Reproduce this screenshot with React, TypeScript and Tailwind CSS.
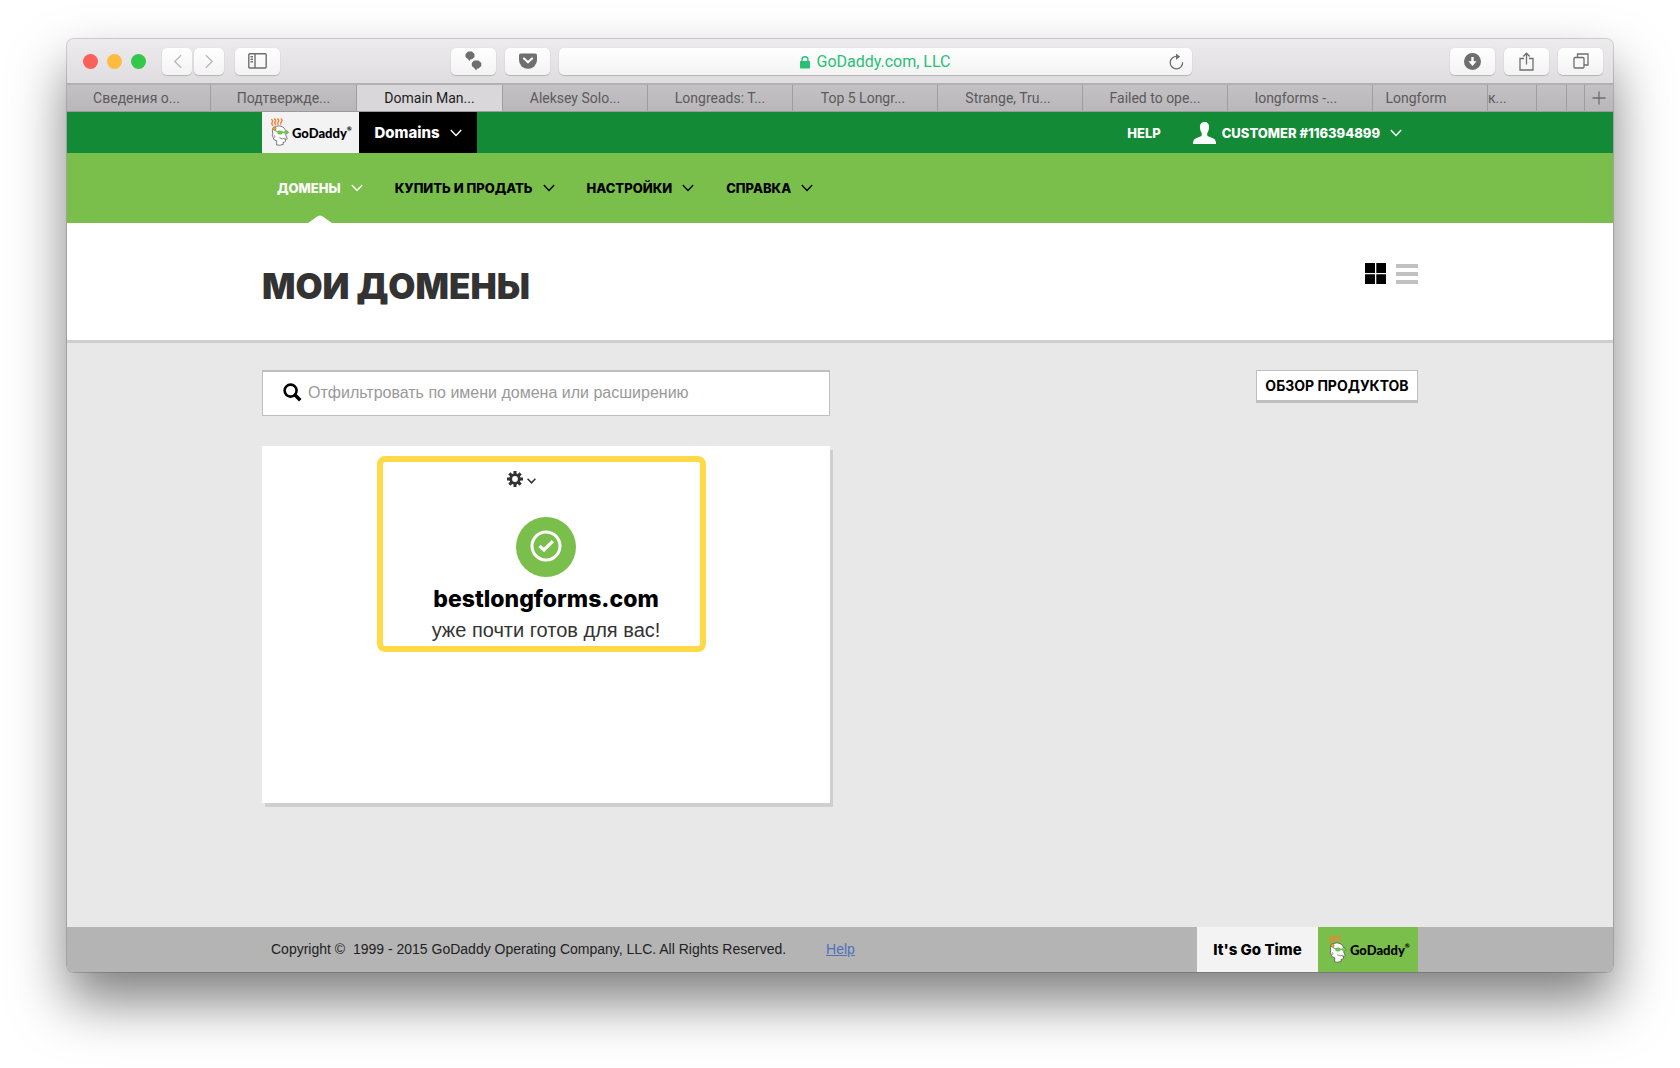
import type { ReactNode } from "react"

const tabs = [
  { title: "Сведения о...", className: "pr-1" },
  { title: "Подтвержде..." },
  { title: "Domain Man...", active: true },
  { title: "Aleksey Solo..." },
  { title: "Longreads: T..." },
  { title: "Top 5 Longr...", className: "pr-1" },
  { title: "Strange, Tru...", className: "pr-1" },
  { title: "Failed to ope..." },
  { title: "longforms -...", className: "pr-2" },
  { title: "Longform", className: "pr-7" },
  { title: "к...", className: "justify-start" },
  { title: "" },
  { title: "" },
]

const menu = [
  { title: "ДОМЕНЫ", active: true },
  { title: "КУПИТЬ И ПРОДАТЬ" },
  { title: "НАСТРОЙКИ" },
  { title: "СПРАВКА" },
]

function Chevron({ className = "w-3 h-2" }: { className?: string }) {
  return (
    <svg viewBox="0 0 12 8" className={className} fill="none" stroke="currentColor" strokeWidth="1.4">
      <path d="M0.8 1 L6 6.4 L11.2 1" />
    </svg>
  )
}

function ToolButton({ label, className = "w-[45px]", children }: { label: string; className?: string; children: ReactNode }) {
  return (
    <button
      aria-label={label}
      className={`${className} h-[27px] shrink-0 rounded-[5px] bg-gradient-to-b from-white to-[#f4f3f4] shadow-[0_1px_1px_#b5b3b5,0_0_1px_#c8c6c8] flex items-center justify-center text-[#6e6e6e]`}
    >
      {children}
    </button>
  )
}

function Logo() {
  return (
    <a href="#" className="flex items-center gap-0.5 text-black no-underline">
      <svg viewBox="60 38 60 88" className="w-5 h-[29px] shrink-0">
        <path
          d="M63 42 q8 3 3 9 q-3 5 4 10 M72 40 q8 4 3 10 q-3 5 3 9 M82 40 q7 5 2 10 q-3 4 1 9 M92 40 q8 4 2 10 q-3 4 -2 8"
          fill="none"
          stroke="#f58233"
          strokeWidth="4.2"
        />
        <path
          d="M67 76 Q70 63 86 62 Q101 62 107 76 L112 78 Q111 87 107 89 L112 101 Q110 104 105 102 L107 108 Q104 113 99 112 L100 118 Q90 122 80 120 L80 107 Q69 106 69 96 Q65 90 68 86 Z"
          fill="#fff"
          stroke="#3a3a3a"
          strokeWidth="2"
        />
        <path d="M88 98 q8 6 18 1 M72 90 q4 3 2 8" fill="none" stroke="#3a3a3a" strokeWidth="1.8" />
        <circle cx="73" cy="70" r="5" fill="#f9b51a" stroke="#3a3a3a" strokeWidth="1.4" />
        <path d="M74 76 L83 80 M97 81 L103 81" stroke="#3a3a3a" strokeWidth="2" />
        <ellipse cx="90" cy="82" rx="8" ry="5" fill="#6fd044" stroke="#3f9a35" strokeWidth="1.4" />
        <ellipse cx="109" cy="82" rx="7" ry="4" fill="#6fd044" stroke="#3f9a35" strokeWidth="1.4" />
      </svg>
      <span className="flex items-start font-[Lato,sans-serif] text-[13px] leading-5 font-black">
        GoDaddy<span className="text-[6px] leading-3">®</span>
      </span>
    </a>
  )
}

function Toolbar() {
  return (
    <div className="h-[44px] shrink-0 pl-4 pr-[10px] flex items-center bg-gradient-to-b from-[#edebed] to-[#dfdddf]">
      <div className="flex gap-[9px]">
        <span className="size-[15px] rounded-full bg-[#fc605b]" />
        <span className="size-[15px] rounded-full bg-[#fdbc40]" />
        <span className="size-[15px] rounded-full bg-[#34c84a]" />
      </div>
      <div className="ml-4 flex gap-0.5">
        <ToolButton label="Back" className="w-[30px]">
          <svg viewBox="0 0 10 16" className="w-[9px] h-[15px]" fill="none" stroke="#b9b9b9" strokeWidth="1.5">
            <path d="M9 1 L2 8 L9 15" />
          </svg>
        </ToolButton>
        <ToolButton label="Forward" className="w-[30px]">
          <svg viewBox="0 0 10 16" className="w-[9px] h-[15px]" fill="none" stroke="#b9b9b9" strokeWidth="1.5">
            <path d="M1 1 L8 8 L1 15" />
          </svg>
        </ToolButton>
      </div>
      <div className="ml-[11px]">
        <ToolButton label="Sidebar">
          <svg viewBox="0 0 19 16" className="w-[19px] h-4" fill="none" stroke="currentColor" strokeWidth="1.4">
            <rect x="0.8" y="0.8" width="17.4" height="14.2" rx="1" />
            <path d="M7 1 V15 M2.5 3.8 H5 M2.5 6.3 H5 M2.5 8.8 H5" />
          </svg>
        </ToolButton>
      </div>
      <div className="ml-[171px] mr-[258px] flex-1 flex gap-[9px]">
        <ToolButton label="Ghostery">
          <svg viewBox="0 0 17 20" className="w-[17px] h-5" fill="currentColor">
            <path d="M3 0.5 H7 L9.5 3 V6 L7 8.3 H5.5 L4.5 10 L3 8.3 L0.5 6 V3 Z" />
            <path d="M9 9.5 H13.5 L16.3 12 V15 L13.5 17.5 H12.3 L11 19.5 L9.7 17.5 L6.8 15 V12 Z" />
          </svg>
        </ToolButton>
        <ToolButton label="Pocket">
          <svg viewBox="0 0 18 16" className="w-[18px] h-4">
            <path d="M1.8 0.5 H16.2 Q18 0.5 18 2.3 V7 A9 8.7 0 0 1 0 7 V2.3 Q0 0.5 1.8 0.5 Z" fill="currentColor" />
            <path d="M5 5.5 L9 9.3 L13 5.5" fill="none" stroke="#fff" strokeWidth="2.2" strokeLinecap="round" strokeLinejoin="round" />
          </svg>
        </ToolButton>
        <div className="relative h-[27px] flex-1 pt-0.5 rounded-[5px] bg-gradient-to-b from-white to-[#f4f3f4] shadow-[0_1px_1px_#b5b3b5,0_0_1px_#c8c6c8] flex items-center justify-center gap-1.5">
          <svg viewBox="0 0 10 13" className="w-[10px] h-[13px]">
            <rect x="0" y="5" width="10" height="7.5" rx="0.8" fill="#27c175" />
            <path d="M2 6 V3.8 A3 3 0 0 1 8 3.8 V6" fill="none" stroke="#27c175" strokeWidth="1.4" />
          </svg>
          <input
            aria-label="Address"
            defaultValue="GoDaddy.com, LLC"
            className="field-sizing-content bg-transparent font-[Roboto,sans-serif] text-[16px] leading-5 text-[#27c175] outline-none"
          />
          <button aria-label="Reload" className="absolute right-2 top-[5px] text-[#6e6e6e]">
            <svg viewBox="0 0 15 17" className="w-[15px] h-[17px]" fill="none" stroke="currentColor" strokeWidth="1.3">
              <path d="M13.6 9.2 A6.2 6.2 0 1 1 8 3.5" />
              <path d="M7 0.5 L11.2 3.7 L7 6.8 Z" fill="currentColor" stroke="none" />
            </svg>
          </button>
        </div>
      </div>
      <div className="flex gap-[9px]">
        <ToolButton label="Downloads">
          <svg viewBox="0 0 17 17" className="size-[17px]">
            <circle cx="8.5" cy="8.5" r="8.5" fill="currentColor" />
            <path d="M7.3 4 H9.7 V8.3 H12.6 L8.5 13 L4.4 8.3 H7.3 Z" fill="#fff" />
          </svg>
        </ToolButton>
        <ToolButton label="Share">
          <svg viewBox="0 0 15 19" className="w-[15px] h-[19px]" fill="none" stroke="currentColor" strokeWidth="1.3">
            <path d="M5 6.5 H1 V18 H14 V6.5 H10 M7.5 12.5 V1.5 M4.3 4.5 L7.5 1.2 L10.7 4.5" />
          </svg>
        </ToolButton>
        <ToolButton label="Show all tabs">
          <svg viewBox="0 0 16 16" className="size-4" fill="none" stroke="currentColor" strokeWidth="1.3">
            <rect x="1" y="4.5" width="10" height="10.5" rx="1" />
            <path d="M4.5 4.5 V1 H15 V12 H11" />
          </svg>
        </ToolButton>
      </div>
    </div>
  )
}

function TabBar() {
  return (
    <div className="h-[29px] shrink-0 grid grid-cols-[144fr_146fr_146fr_145fr_145fr_145fr_145fr_145fr_145fr_115fr_49fr_30fr_18fr_28fr] border-t-2 border-b border-t-[#b3b0b3] border-b-[#9c9a9c] bg-gradient-to-b from-[#c3c1c3] to-[#b9b7b9] font-[Roboto,sans-serif] text-[14px] leading-5">
      {tabs.map((tab, index) => (
        <button
          key={index}
          aria-label={tab.title || "Tab"}
          className={`min-w-0 overflow-hidden whitespace-nowrap flex items-center border-r border-[#9f9d9f] ${
            tab.active ? "bg-[#d9d7d9] text-[#1d1d1d]" : "text-[#5c5a5c]"
          } ${tab.className ?? ""} ${tab.className === "justify-start" ? "" : "justify-center"}`}
        >
          {tab.title}
        </button>
      ))}
      <button aria-label="New tab" className="flex items-center justify-center text-[#6e6c6e]">
        <svg viewBox="0 0 14 14" className="size-[14px]" stroke="currentColor" strokeWidth="1.3">
          <path d="M7 0.5 V13.5 M0.5 7 H13.5" />
        </svg>
      </button>
    </div>
  )
}

export default function App() {
  return (
    <div className="min-h-screen bg-white px-[67px] pt-[39px] pb-24 flex flex-col font-['Liberation_Sans',sans-serif]">
      <div className="flex-1 flex flex-col overflow-hidden rounded-[7px] bg-[#e8e8e8] shadow-[0_0_0_1px_rgba(0,0,0,0.16),0_29px_54px_rgba(0,0,0,0.5)]">
        <Toolbar />
        <TabBar />

        <header className="h-[41px] shrink-0 bg-[#138a36] font-[Inter,sans-serif] font-extrabold text-white">
          <div className="h-full max-w-[1156px] mx-auto flex items-stretch">
            <div className="w-[97px] pl-2 bg-[#f3f3f3] flex items-center">
              <Logo />
            </div>
            <button className="w-[118px] bg-black flex items-center justify-center gap-2.5 text-[15px] leading-5">
              Domains <Chevron />
            </button>
            <div className="ml-auto pr-4 flex items-center text-[13px] leading-5">
              <a href="#" className="mr-8">HELP</a>
              <button className="flex items-center gap-2.5">
                <span className="flex items-center gap-1.5">
                  <svg viewBox="0 0 23 22" className="w-[23px] h-[22px]" fill="currentColor">
                    <path d="M11.5 0 C15 0 16.3 2.5 16 6 C15.8 8.5 15 10 14.2 11.3 L14.4 14 L20.5 16.6 Q23 17.8 23 22 H0 Q0 17.8 2.5 16.6 L8.6 14 L8.8 11.3 C8 10 7.2 8.5 7 6 C6.7 2.5 8 0 11.5 0 Z" />
                  </svg>
                  CUSTOMER #116394899
                </span>
                <Chevron />
              </button>
            </div>
          </div>
        </header>

        <nav className="h-[70px] shrink-0 bg-[#7abf4b] font-[Inter,sans-serif] text-[13px] leading-5 font-extrabold">
          <div className="h-full max-w-[1156px] mx-auto pl-[15px] flex items-stretch gap-8">
            {menu.map((item) => (
              <button key={item.title} className={`relative flex items-center gap-2.5 ${item.active ? "text-white" : "text-black"}`}>
                {item.title} <Chevron />
                {item.active && (
                  <svg viewBox="0 0 24 8" className="absolute bottom-0 left-1/2 -translate-x-1/2 w-6 h-2" fill="#fff">
                    <path d="M0 8 L10 1 Q12 0 14 1 L24 8 Z" />
                  </svg>
                )}
              </button>
            ))}
          </div>
        </nav>

        <section className="h-[120px] shrink-0 bg-white border-b-3 border-[#cfcfcf]">
          <div className="h-full max-w-[1156px] mx-auto flex items-start justify-between">
            <h1 className="pt-[39px] font-[Inter,sans-serif] text-[35px] leading-[48px] font-black text-[#333]">МОИ ДОМЕНЫ</h1>
            <div className="pt-10 flex items-center gap-2.5">
              <button aria-label="Grid view">
                <svg viewBox="0 0 21 21" className="size-[21px]" fill="#000">
                  <path d="M0 0 H10 V10 H0 Z M11.3 0 H21 V10 H11.3 Z M0 11.3 H10 V21 H0 Z M11.3 11.3 H21 V21 H11.3 Z" />
                </svg>
              </button>
              <button aria-label="List view">
                <svg viewBox="0 0 22 20" className="w-[22px] h-5" fill="#c1c1c1">
                  <path d="M0 0 H22 V4 H0 Z M0 8 H22 V12 H0 Z M0 16 H22 V20 H0 Z" />
                </svg>
              </button>
            </div>
          </div>
        </section>

        <main className="flex-1">
          <div className="max-w-[1156px] mx-auto pt-[27px] flex items-start justify-between">
            <div className="w-[568px]">
              <label className="h-[46px] pl-5 pr-4 pb-0.5 bg-white border border-t-2 border-[#bfbfbf] flex items-center gap-1.5">
                <svg viewBox="0 0 19 19" className="size-[19px]" fill="none" stroke="#000">
                  <circle cx="7.6" cy="7.6" r="6" strokeWidth="2.6" />
                  <path d="M12 12 L17.3 17.3" strokeWidth="3.4" />
                </svg>
                <input
                  aria-label="Отфильтровать"
                  placeholder="Отфильтровать по имени домена или расширению"
                  className="flex-1 bg-transparent text-[16px] leading-5 placeholder:text-[#999] outline-none"
                />
              </label>

              <article className="relative mt-[30px] h-[357px] bg-white shadow-[3px_4px_0_#cfcfcf] flex flex-col items-center">
                <button aria-label="Настройки домена" className="mt-[25px] mr-[50px] flex items-center gap-1 text-[#333]">
                  <svg viewBox="-8 -8 16 16" className="size-4">
                    <g fill="currentColor">
                      <path d="M-1.5 -8 H1.5 V8 H-1.5 Z M-8 -1.5 H8 V1.5 H-8 Z" />
                      <path d="M-1.5 -8 H1.5 V8 H-1.5 Z M-8 -1.5 H8 V1.5 H-8 Z" transform="rotate(45)" />
                      <circle r="5.7" />
                    </g>
                    <circle r="2.9" fill="#fff" />
                  </svg>
                  <Chevron className="mt-1 w-[9px] h-1.5 stroke-2" />
                </button>
                <svg viewBox="0 0 60 60" className="mt-[30px] size-[60px]">
                  <circle cx="30" cy="30" r="30" fill="#7abf4b" />
                  <circle cx="30" cy="29" r="14" fill="none" stroke="#fff" strokeWidth="3" />
                  <path d="M23.5 28.8 L28 33 L36.8 24.2" fill="none" stroke="#fff" strokeWidth="3.2" />
                </svg>
                <h2 className="mt-1.5 font-[Inter,sans-serif] text-[23px] leading-8 font-extrabold text-black">bestlongforms.com</h2>
                <p className="text-[20px] leading-[30px] text-[#333]">уже почти готов для вас!</p>
                <div className="absolute top-2.5 left-[115px] w-[329px] h-[196px] rounded-lg border-6 border-[#ffda47] pointer-events-none" />
              </article>
            </div>

            <button className="w-[162px] h-[33px] bg-white border border-b-3 border-[#bfbfbf] font-[Inter,sans-serif] text-[14px] leading-5 font-bold text-black">
              ОБЗОР ПРОДУКТОВ
            </button>
          </div>
        </main>

        <footer className="h-[45px] shrink-0 bg-[#b4b4b4]">
          <div className="h-full max-w-[1156px] mx-auto pl-[9px] flex items-stretch text-[14px] leading-5 text-[#222]">
            <p className="pb-0.5 self-center">Copyright ©&nbsp; 1999 - 2015 GoDaddy Operating Company, LLC. All Rights Reserved.</p>
            <a href="#" className="ml-10 pb-0.5 self-center text-[#4d72b8] underline">Help</a>
            <div className="ml-auto w-[121px] bg-[#f3f3f3] flex items-center justify-center font-[Inter,sans-serif] text-[15px] font-extrabold text-black">
              It's Go Time
            </div>
            <div className="w-[100px] pl-2.5 bg-[#7abf4b] flex items-center">
              <Logo />
            </div>
          </div>
        </footer>
      </div>
    </div>
  )
}
